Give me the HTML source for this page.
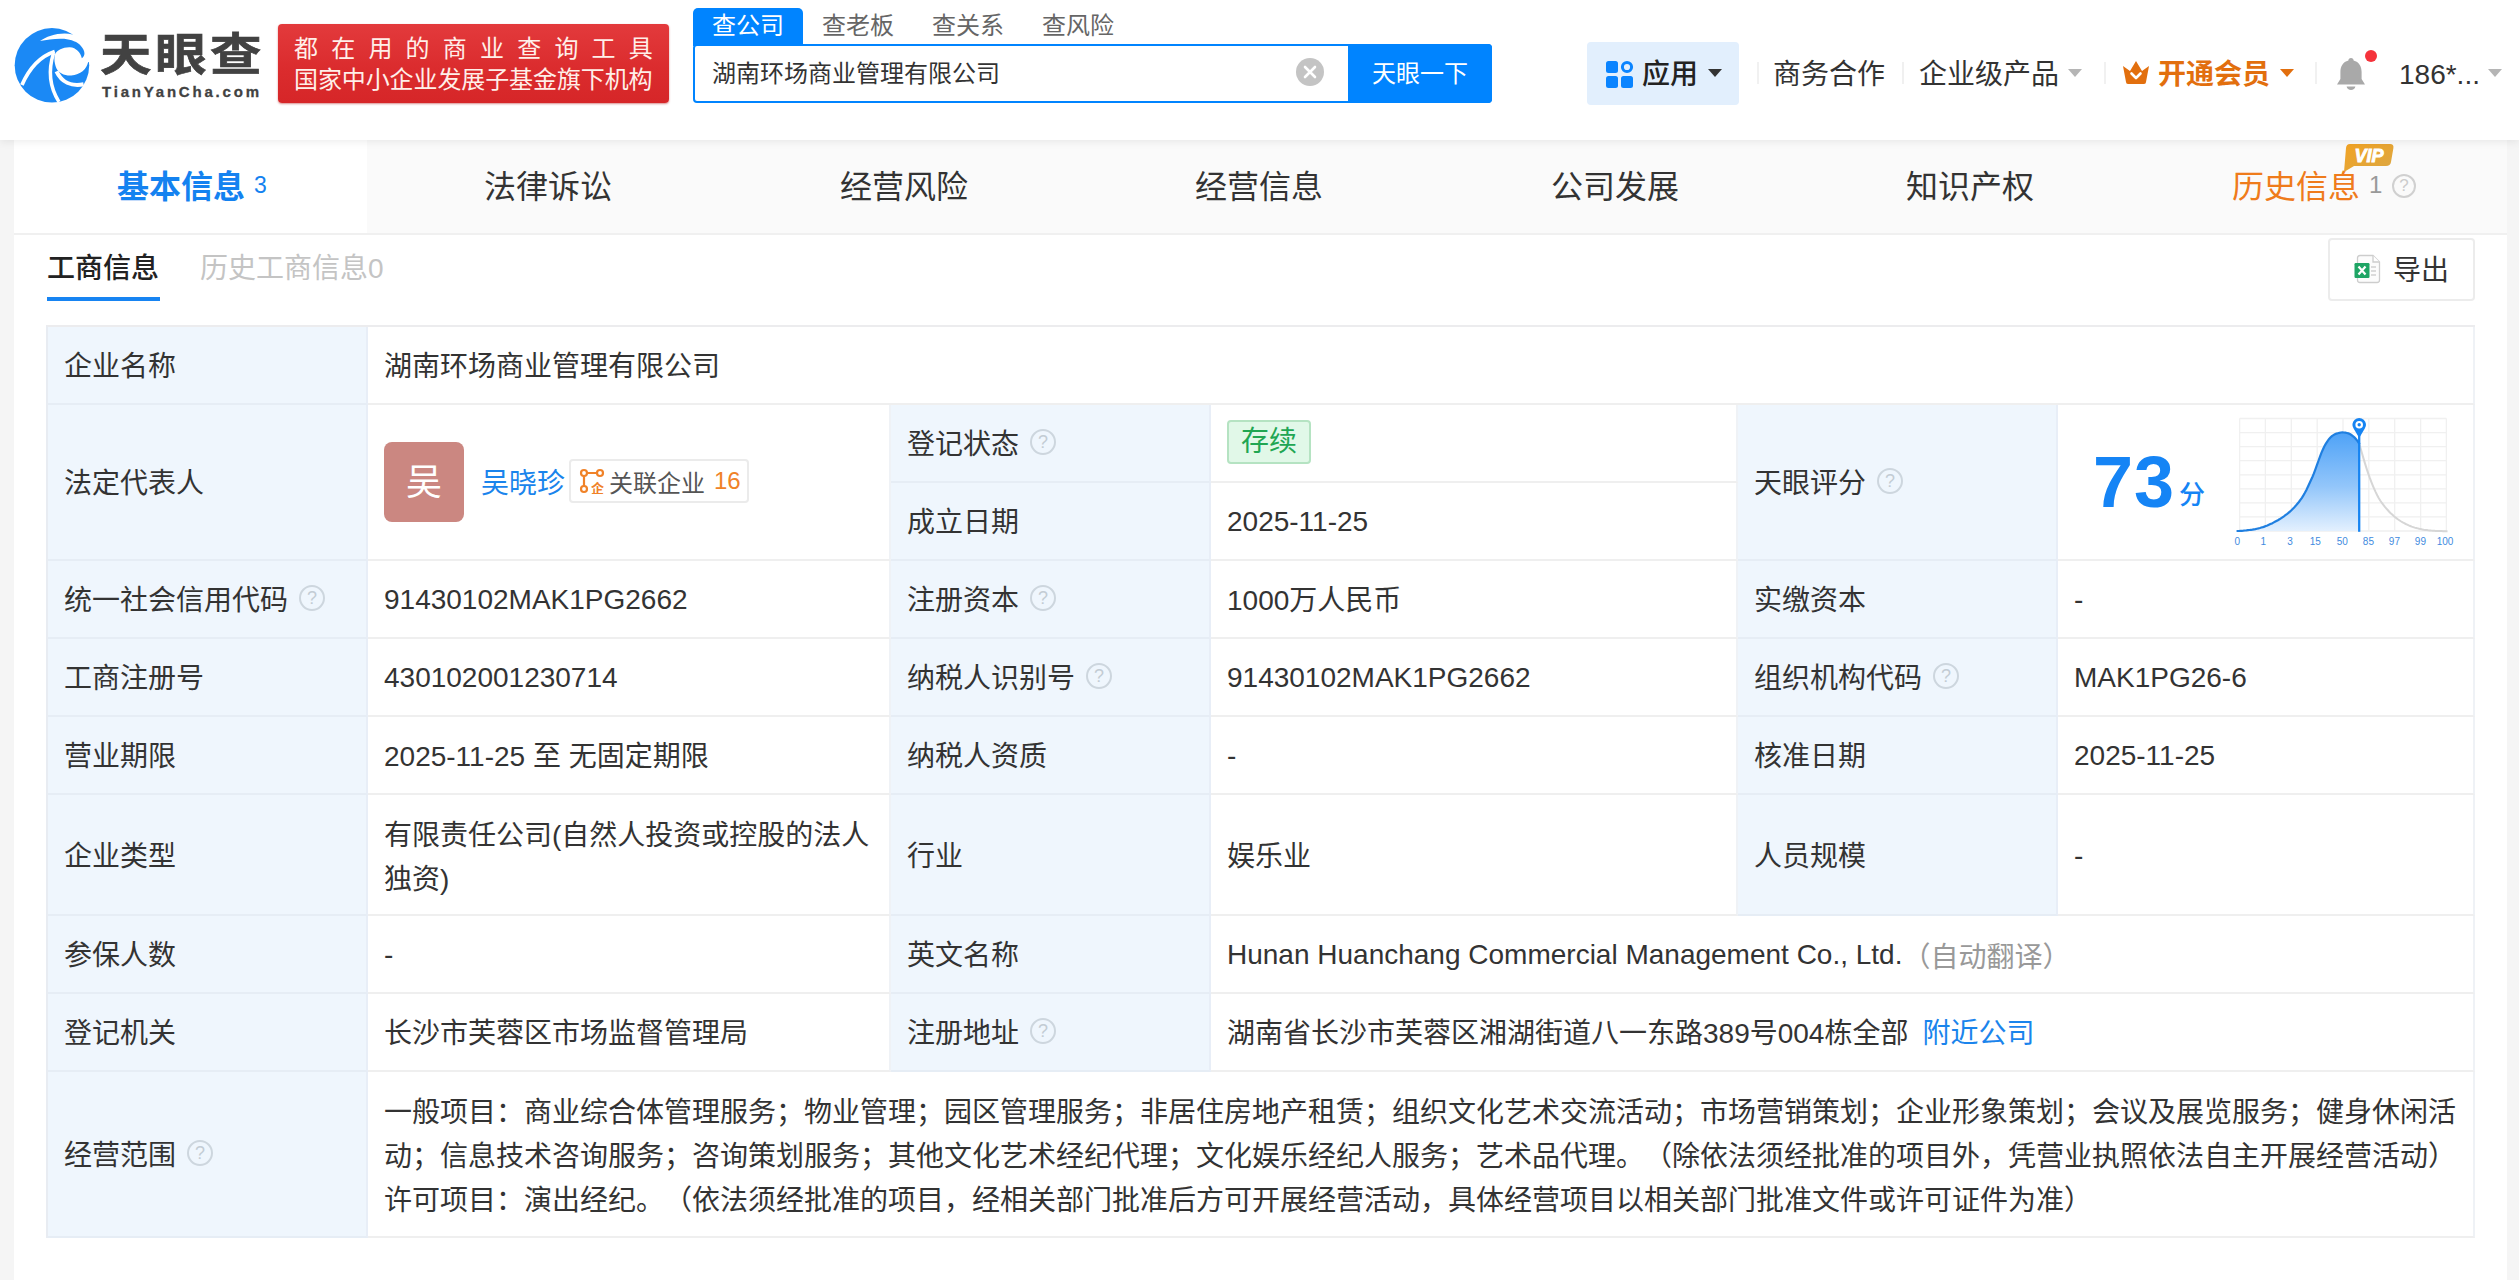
<!DOCTYPE html>
<html lang="zh-CN">
<head>
<meta charset="utf-8">
<title>湖南环场商业管理有限公司 - 天眼查</title>
<style>
*{box-sizing:border-box;margin:0;padding:0}
html,body{width:2519px;height:1280px;overflow:hidden;background:#f5f5f5}
body{position:relative;text-spacing-trim:space-all;font-family:"Liberation Sans","Noto Sans CJK SC",sans-serif;color:#333;font-size:28px}
.abs{position:absolute;white-space:nowrap}
/* header */
#hdr{position:absolute;left:0;top:0;width:2519px;height:140px;background:#fff;box-shadow:0 2px 8px rgba(0,0,0,.075);z-index:5}
#card{position:absolute;left:14px;top:140px;width:2493px;height:1140px;background:#fff}
#nav{position:absolute;left:0;top:0;width:2493px;height:95px;background:#fafafa;border-bottom:2px solid #f0f0f0}
.nt{position:absolute;top:1px;height:94px;line-height:92px;text-align:center;font-size:32px;color:#333;white-space:nowrap}
/* table */
.c{position:absolute;padding-bottom:2px;border-right:2px solid #eff2f6;border-bottom:2px solid #efefef;padding-left:16px;white-space:nowrap;display:flex;align-items:center;font-size:28px;color:#333}
.c.n{padding-bottom:0;padding-top:2px}
.c.m{padding-bottom:0;padding-top:6px}
.l{background:#eff6fd;border-right-color:#e8eef7;border-bottom-color:#e6edf5}
.q{display:inline-block;width:26px;height:26px;border:2px solid #cdd6de;border-radius:50%;margin-left:11px;position:relative;top:0;font-size:18px;line-height:22px;text-align:center;color:#c3ccd4;font-family:"Liberation Sans",sans-serif}
</style>
</head>
<body>
<div id="hdr">
<!-- logo -->
<svg class="abs" style="left:8px;top:20px" width="90" height="90" viewBox="0 0 90 90"><g transform="scale(0.07031)">
<circle cx="625" cy="645" r="530" fill="#1b89f5"/>
<path d="M450 302 C560 220 760 165 920 205 L1100 150 L1300 640 L1140 598 C1120 700 1030 780 900 790 C800 795 720 750 690 690 C660 620 650 540 672 480 C700 430 780 385 880 388 C970 395 1030 460 1050 545 C1110 500 1090 425 1040 372 C990 312 900 280 800 268 C680 260 560 280 455 300Z" fill="#fff"/>
<path d="M198 925 C300 690 450 520 665 448" stroke="#fff" stroke-width="54" fill="none"/>
<path d="M648 470 C575 700 590 950 725 1165" stroke="#fff" stroke-width="50" fill="none"/>
<path d="M690 730 C760 880 900 950 1075 915" stroke="#fff" stroke-width="58" fill="none"/>
</g></svg>
<div class="abs" id="lg1" style="left:100px;top:18px;font-size:45px;font-weight:bold;letter-spacing:3px;color:#424242;line-height:68px;font-family:'Noto Sans CJK SC',sans-serif;transform-origin:0 0;transform:scaleX(1.145);-webkit-text-stroke:0.7px #424242">天眼查</div>
<div class="abs" id="lg2" style="left:102px;top:82px;font-size:15px;font-weight:bold;letter-spacing:2.8px;color:#424242;line-height:20px;-webkit-text-stroke:0.3px #424242">TianYanCha.com</div>
<!-- red banner -->
<div class="abs" style="left:278px;top:24px;width:391px;height:79px;border-radius:4px;background:linear-gradient(180deg,#e33a3c 0%,#db2c2e 55%,#d62628 100%);box-shadow:0 1px 2px rgba(180,30,30,.5)"></div>
<div class="abs" style="left:294px;top:32px;font-size:24px;line-height:34px;color:#ffefe9;letter-spacing:13.2px">都在用的商业查询工具</div>
<div class="abs" style="left:294px;top:63px;font-size:24px;line-height:34px;color:#ffefe9;letter-spacing:-0.1px">国家中小企业发展子基金旗下机构</div>
<!-- search -->
<div class="abs" style="left:693px;top:8px;width:110px;height:38px;background:#0084ff;border-radius:5px 5px 0 0"></div>
<div class="abs" style="left:712px;top:9px;font-size:24px;line-height:34px;color:#fff">查公司</div>
<div class="abs" style="left:822px;top:9px;font-size:24px;line-height:34px;color:#666">查老板</div>
<div class="abs" style="left:932px;top:9px;font-size:24px;line-height:34px;color:#666">查关系</div>
<div class="abs" style="left:1042px;top:9px;font-size:24px;line-height:34px;color:#666">查风险</div>
<div class="abs" style="left:693px;top:44px;width:799px;height:59px;border:2px solid #0084ff;border-radius:4px;background:#fff"></div>
<div class="abs" style="left:1348px;top:44px;width:144px;height:59px;background:#0084ff;border-radius:0 4px 4px 0"></div>
<div class="abs" style="left:712px;top:57px;font-size:24px;line-height:34px;color:#333">湖南环场商业管理有限公司</div>
<div class="abs" style="left:1372px;top:57px;font-size:24px;line-height:34px;color:#fff">天眼一下</div>
<svg class="abs" style="left:1296px;top:58px" width="28" height="28" viewBox="0 0 28 28"><circle cx="14" cy="14" r="14" fill="#c4c4c4"/><path d="M9 9L19 19M19 9L9 19" stroke="#fff" stroke-width="2.6" stroke-linecap="round"/></svg>
<!-- right nav -->
<div class="abs" style="left:1587px;top:42px;width:152px;height:63px;background:#e2effd;border-radius:4px"></div>
<svg class="abs" style="left:1606px;top:60px" width="28" height="28" viewBox="0 0 28 28"><rect x="0" y="1" width="12" height="12" rx="2.5" fill="#0a84ff"/><rect x="0" y="16" width="12" height="12" rx="2.5" fill="#0a84ff"/><rect x="15" y="16" width="12" height="12" rx="2.5" fill="#0a84ff"/><circle cx="21" cy="7" r="4.6" fill="none" stroke="#0a84ff" stroke-width="3"/></svg>
<div class="abs" style="left:1642px;top:55px;font-size:28px;line-height:40px;color:#222;font-weight:500">应用</div>
<div class="abs" style="left:1708px;top:69px;width:0;height:0;border-left:7px solid transparent;border-right:7px solid transparent;border-top:8px solid #333"></div>
<div class="abs" style="left:1757px;top:62px;width:2px;height:22px;background:#f1f1f1"></div>
<div class="abs" style="left:1773px;top:55px;font-size:28px;line-height:40px;color:#333">商务合作</div>
<div class="abs" style="left:1902px;top:62px;width:2px;height:22px;background:#f0f0f0"></div>
<div class="abs" style="left:1919px;top:55px;font-size:28px;line-height:40px;color:#333">企业级产品</div>
<div class="abs" style="left:2068px;top:69px;width:0;height:0;border-left:7px solid transparent;border-right:7px solid transparent;border-top:8px solid #b5b5b5"></div>
<div class="abs" style="left:2104px;top:62px;width:2px;height:22px;background:#f1f1f1"></div>
<svg class="abs" style="left:2121px;top:58px" width="30" height="28" viewBox="0 0 30 28"><path d="M2 8 L9 13 L15 3 L21 13 L28 8 L25 24 Q25 26 23 26 L7 26 Q5 26 5 24 Z" fill="#e26f0e"/><path d="M10.5 15.5 L15 20 L19.5 15.5" fill="none" stroke="#fff" stroke-width="2.6" stroke-linecap="round" stroke-linejoin="round"/></svg>
<div class="abs" style="left:2158px;top:55px;font-size:28px;line-height:40px;color:#e26f0e;font-weight:bold">开通会员</div>
<div class="abs" style="left:2280px;top:69px;width:0;height:0;border-left:7px solid transparent;border-right:7px solid transparent;border-top:8px solid #e26f0e"></div>
<div class="abs" style="left:2315px;top:62px;width:2px;height:22px;background:#f1f1f1"></div>
<svg class="abs" style="left:2334px;top:56px" width="34" height="36" viewBox="0 0 34 36"><path d="M17 2 C18.6 2 19.6 3 19.6 4.6 C25 6 27.6 10.6 27.6 16 L27.6 23 L31 28.4 L3 28.4 L6.4 23 L6.4 16 C6.4 10.6 9 6 14.4 4.6 C14.4 3 15.4 2 17 2 Z" fill="#a9a9a9"/><path d="M12.6 30.6 L21.4 30.6 C21 33 19.2 34 17 34 C14.8 34 13 33 12.6 30.6Z" fill="#a9a9a9"/></svg>
<div class="abs" style="left:2365px;top:50px;width:12px;height:12px;border-radius:50%;background:#f5333b"></div>
<div class="abs" style="left:2399px;top:55px;font-size:28px;line-height:40px;color:#333">186*...</div>
<div class="abs" style="left:2488px;top:69px;width:0;height:0;border-left:7px solid transparent;border-right:7px solid transparent;border-top:8px solid #b5b5b5"></div>
</div>
<div id="card">
<div id="nav">
<div class="abs" style="left:0;top:0;width:353px;height:93px;background:#fff"></div>
<div class="nt" style="left:103px;color:#1482f0;font-weight:bold">基本信息</div>
<div class="abs" style="left:240px;top:31px;font-size:23px;line-height:28px;color:#1482f0">3</div>
<div class="nt" style="left:470px">法律诉讼</div>
<div class="nt" style="left:826px">经营风险</div>
<div class="nt" style="left:1181px">经营信息</div>
<div class="nt" style="left:1537px">公司发展</div>
<div class="nt" style="left:1892px">知识产权</div>
<div class="nt" style="left:2218px;color:#ef7b1b">历史信息</div>
<div class="abs" style="left:2355px;top:31px;font-size:24px;line-height:28px;color:#999">1</div>
<div class="abs" style="left:2378px;top:34px;width:24px;height:24px;border:2px solid #d0d0d0;border-radius:50%;font-size:17px;line-height:20px;text-align:center;color:#ccc">?</div>
<svg class="abs" style="left:2328px;top:3px" width="54" height="30" viewBox="0 0 54 30"><defs><linearGradient id="vg" x1="0" y1="0" x2="1" y2="1"><stop offset="0" stop-color="#f2a324"/><stop offset="1" stop-color="#dba743"/></linearGradient></defs><path d="M8 1 L48 1 Q52 1 51.4 5 L49 19 Q48.4 23 44 23 L12 23 L2 29 L4 5 Q4.4 1 8 1Z" fill="url(#vg)"/><text x="27" y="19" font-family="Liberation Sans, sans-serif" font-size="18" font-weight="bold" font-style="italic" fill="#fff" stroke="#fff" stroke-width="0.9" text-anchor="middle">VIP</text></svg>
</div>
<div class="abs" style="left:33px;top:109px;font-size:28px;line-height:40px;color:#222;font-weight:500">工商信息</div>
<div class="abs" style="left:33px;top:157px;width:113px;height:4px;background:#1784f2"></div>
<div class="abs" style="left:186px;top:109px;font-size:28px;line-height:40px;color:#c4c4c4">历史工商信息0</div>
<div class="abs" style="left:2314px;top:98px;width:147px;height:63px;border:2px solid #ececec;border-radius:4px;background:#fff"></div>
<svg class="abs" style="left:2339px;top:114px" width="28" height="30" viewBox="0 0 28 30"><path d="M7 1.5 H20 L26.5 8 V26 Q26.5 28.5 24 28.5 H7 Q4.5 28.5 4.5 26 V4 Q4.5 1.5 7 1.5Z" fill="#fcfcfc" stroke="#cdcdcd" stroke-width="1.3"/><path d="M20 1.5 V8 H26.5" fill="#fff" stroke="#cdcdcd" stroke-width="1.3"/><path d="M18 13h5M18 17h5M18 21h5" stroke="#d0d0d0" stroke-width="1.4"/><rect x="1.5" y="9" width="15" height="15" rx="1.2" fill="#1fa565"/><path d="M5.5 12.5 L12.5 20.5 M12.5 12.5 L5.5 20.5" stroke="#fff" stroke-width="2.2"/></svg>
<div class="abs" style="left:2379px;top:111px;font-size:28px;line-height:40px;color:#333">导出</div>
<div id="tbl" style="position:absolute;left:32px;top:185px;width:2429px;height:913px;border-top:2px solid #ececee;border-left:2px solid #e8ecf2">
<div class="c l" style="left:0px;top:0px;width:320px;height:78px;">企业名称</div>
<div class="c" style="left:320px;top:0px;width:2107px;height:78px;">湖南环场商业管理有限公司</div>
<div class="c l" style="left:0px;top:78px;width:320px;height:156px;">法定代表人</div>
<div class="c" style="left:320px;top:78px;width:523px;height:156px;"><span style="display:inline-block;width:80px;height:80px;border-radius:8px;background:#cb8781;color:#fff;font-size:36px;line-height:82px;text-align:center;position:relative;top:1px">吴</span><span style="color:#1a84ec;margin-left:17px">吴晓珍</span><span style="display:inline-flex;align-items:center;height:44px;border:2px solid #ebebeb;border-radius:4px;margin-left:4px;padding:0 6px 0 8px;font-size:24px;color:#555;background:#fff"><svg width="26" height="26" viewBox="0 0 26 26" style="margin-right:4px"><g fill="none" stroke="#f08228" stroke-width="2.2"><circle cx="5" cy="5" r="3"/><circle cx="21" cy="5" r="3"/><circle cx="5" cy="21" r="3"/><path d="M8 5H18M5 8V18"/></g><text x="12" y="25" font-size="13" fill="#f08228" font-family="Noto Sans CJK SC, sans-serif" font-weight="bold">企</text></svg>关联企业<span style="color:#f08228;margin-left:9px">16</span></span></div>
<div class="c l" style="left:843px;top:78px;width:320px;height:78px;">登记状态<span class="q">?</span></div>
<div class="c" style="left:1163px;top:78px;width:527px;height:78px;"><span style="display:inline-block;height:44px;line-height:40px;padding:0 12px;border:2px solid #b5e3c2;border-radius:4px;background:#e1f8e8;color:#21a652;font-size:28px">存续</span></div>
<div class="c l" style="left:843px;top:156px;width:320px;height:78px;">成立日期</div>
<div class="c n" style="left:1163px;top:156px;width:527px;height:78px;">2025-11-25</div>
<div class="c l" style="left:1690px;top:78px;width:320px;height:156px;">天眼评分<span class="q">?</span></div>
<div class="c" style="left:2010px;top:78px;width:417px;height:156px;"><svg class="abs" style="left:-1px;top:-1px" width="417" height="154" viewBox="0 0 417 154"><defs><linearGradient id="sg" x1="0" y1="0" x2="0" y2="1"><stop offset="0" stop-color="#4ea2f7"/><stop offset="0.55" stop-color="#93c6fa"/><stop offset="1" stop-color="#e3f0fe"/></linearGradient></defs>
<path d="M182.6 14.5V127.0M208.4 14.5V127.0M234.3 14.5V127.0M260.2 14.5V127.0M286.0 14.5V127.0M311.8 14.5V127.0M337.7 14.5V127.0M363.6 14.5V127.0M389.4 14.5V127.0M182.6 14.5H389.4M182.6 28.6H389.4M182.6 42.6H389.4M182.6 56.7H389.4M182.6 70.8H389.4M182.6 84.8H389.4M182.6 98.9H389.4M182.6 112.9H389.4M182.6 127.0H389.4" stroke="#f0f0f0" stroke-width="1.3" fill="none"/>
<path d="M180.4,127.0 L181.9,127.0 L183.4,126.9 L184.9,126.8 L186.4,126.7 L187.9,126.5 L189.4,126.4 L190.9,126.2 L192.4,126.0 L193.9,125.8 L195.4,125.6 L196.9,125.3 L198.4,125.1 L199.9,124.7 L201.4,124.4 L202.9,124.0 L204.4,123.5 L205.9,123.1 L207.4,122.6 L208.9,122.0 L210.4,121.5 L211.9,120.8 L213.4,120.1 L214.9,119.4 L216.4,118.6 L217.9,117.8 L219.4,117.0 L220.9,116.2 L222.4,115.3 L223.9,114.3 L225.4,113.3 L226.9,112.3 L228.4,111.2 L229.9,110.1 L231.4,108.9 L232.9,107.6 L234.4,106.2 L235.9,104.7 L237.4,103.2 L238.9,101.6 L240.4,99.8 L241.9,98.0 L243.4,95.9 L244.9,93.8 L246.4,91.4 L247.9,88.8 L249.4,85.9 L250.9,82.7 L252.4,79.5 L253.9,76.3 L255.4,73.0 L256.9,69.4 L258.4,65.4 L259.9,61.2 L261.4,57.0 L262.9,52.9 L264.4,48.9 L265.9,45.5 L267.4,42.3 L268.9,39.6 L270.4,37.3 L271.9,35.2 L273.4,33.5 L274.9,32.1 L276.4,31.1 L277.9,30.3 L279.4,29.6 L280.9,29.2 L282.4,28.8 L283.9,28.5 L285.4,28.4 L286.9,28.5 L288.4,28.7 L289.9,29.0 L291.4,29.4 L292.9,30.0 L294.4,31.0 L295.9,32.1 L297.4,33.4 L298.9,35.0 L300.4,36.9 L301.9,39.0 L302.2,39.4 L302.2,127.0 L180.4,127.0Z" fill="url(#sg)"/>
<path d="M302.2,39.4 L303.7,44.7 L305.2,50.0 L306.7,55.1 L308.2,60.1 L309.7,64.9 L311.2,69.4 L312.7,73.7 L314.2,77.6 L315.7,81.3 L317.2,84.8 L318.7,88.1 L320.2,91.2 L321.7,94.0 L323.2,96.5 L324.7,98.7 L326.2,100.7 L327.7,102.6 L329.2,104.4 L330.7,106.0 L332.2,107.7 L333.7,109.2 L335.2,110.6 L336.7,112.0 L338.2,113.2 L339.7,114.4 L341.2,115.5 L342.7,116.5 L344.2,117.5 L345.7,118.4 L347.2,119.2 L348.7,120.0 L350.2,120.7 L351.7,121.4 L353.2,122.0 L354.7,122.6 L356.2,123.1 L357.7,123.6 L359.2,124.0 L360.7,124.4 L362.2,124.8 L363.7,125.1 L365.2,125.4 L366.7,125.7 L368.2,125.9 L369.7,126.1 L371.2,126.3 L372.7,126.4 L374.2,126.6 L375.7,126.7 L377.2,126.8 L378.7,126.9 L380.2,127.0 L381.7,127.1 L383.2,127.1 L384.7,127.1 L386.2,127.2 L387.7,127.2 L389.2,127.2 L390.5,127.2" stroke="#d6d6d6" stroke-width="2" fill="none"/>
<path d="M180.4,127.0 L181.9,127.0 L183.4,126.9 L184.9,126.8 L186.4,126.7 L187.9,126.5 L189.4,126.4 L190.9,126.2 L192.4,126.0 L193.9,125.8 L195.4,125.6 L196.9,125.3 L198.4,125.1 L199.9,124.7 L201.4,124.4 L202.9,124.0 L204.4,123.5 L205.9,123.1 L207.4,122.6 L208.9,122.0 L210.4,121.5 L211.9,120.8 L213.4,120.1 L214.9,119.4 L216.4,118.6 L217.9,117.8 L219.4,117.0 L220.9,116.2 L222.4,115.3 L223.9,114.3 L225.4,113.3 L226.9,112.3 L228.4,111.2 L229.9,110.1 L231.4,108.9 L232.9,107.6 L234.4,106.2 L235.9,104.7 L237.4,103.2 L238.9,101.6 L240.4,99.8 L241.9,98.0 L243.4,95.9 L244.9,93.8 L246.4,91.4 L247.9,88.8 L249.4,85.9 L250.9,82.7 L252.4,79.5 L253.9,76.3 L255.4,73.0 L256.9,69.4 L258.4,65.4 L259.9,61.2 L261.4,57.0 L262.9,52.9 L264.4,48.9 L265.9,45.5 L267.4,42.3 L268.9,39.6 L270.4,37.3 L271.9,35.2 L273.4,33.5 L274.9,32.1 L276.4,31.1 L277.9,30.3 L279.4,29.6 L280.9,29.2 L282.4,28.8 L283.9,28.5 L285.4,28.4 L286.9,28.5 L288.4,28.7 L289.9,29.0 L291.4,29.4 L292.9,30.0 L294.4,31.0 L295.9,32.1 L297.4,33.4 L298.9,35.0 L300.4,36.9 L301.9,39.0 L302.2,39.4" stroke="#1f7fe0" stroke-width="2.2" fill="none" stroke-linecap="round"/>
<path d="M302.2 127.8V29.0" stroke="#1684f2" stroke-width="2.3"/>
<path d="M302.2 34.0 L296.6 24.6 A6.8 6.8 0 1 1 307.8 24.6Z" fill="#1684f2"/>
<circle cx="302.2" cy="20.7" r="3.8" fill="#fff"/><circle cx="302.2" cy="20.7" r="1.7" fill="#1684f2"/>
<g font-family="Liberation Sans, sans-serif" font-size="10" fill="#3f8be0"><text x="180.4" y="141.4" text-anchor="middle">0</text><text x="206.4" y="141.4" text-anchor="middle">1</text><text x="233.0" y="141.4" text-anchor="middle">3</text><text x="258.2" y="141.4" text-anchor="middle">15</text><text x="285.2" y="141.4" text-anchor="middle">50</text><text x="311.4" y="141.4" text-anchor="middle">85</text><text x="337.4" y="141.4" text-anchor="middle">97</text><text x="363.4" y="141.4" text-anchor="middle">99</text><text x="388.0" y="141.4" text-anchor="middle">100</text></g>
</svg>
<div class="abs" style="left:35px;top:35px;font-size:72px;line-height:84px;font-weight:bold;color:#1584f5;letter-spacing:1px">73</div>
<div class="abs" style="left:121px;top:72px;font-size:26px;line-height:36px;color:#1584f5;font-weight:500">分</div></div>
<div class="c l" style="left:0px;top:234px;width:320px;height:78px;">统一社会信用代码<span class="q">?</span></div>
<div class="c n" style="left:320px;top:234px;width:523px;height:78px;">91430102MAK1PG2662</div>
<div class="c l" style="left:843px;top:234px;width:320px;height:78px;">注册资本<span class="q">?</span></div>
<div class="c" style="left:1163px;top:234px;width:527px;height:78px;">1000万人民币</div>
<div class="c l" style="left:1690px;top:234px;width:320px;height:78px;">实缴资本</div>
<div class="c n" style="left:2010px;top:234px;width:417px;height:78px;">-</div>
<div class="c l" style="left:0px;top:312px;width:320px;height:78px;">工商注册号</div>
<div class="c n" style="left:320px;top:312px;width:523px;height:78px;">430102001230714</div>
<div class="c l" style="left:843px;top:312px;width:320px;height:78px;">纳税人识别号<span class="q">?</span></div>
<div class="c n" style="left:1163px;top:312px;width:527px;height:78px;">91430102MAK1PG2662</div>
<div class="c l" style="left:1690px;top:312px;width:320px;height:78px;">组织机构代码<span class="q">?</span></div>
<div class="c n" style="left:2010px;top:312px;width:417px;height:78px;">MAK1PG26-6</div>
<div class="c l" style="left:0px;top:390px;width:320px;height:78px;">营业期限</div>
<div class="c" style="left:320px;top:390px;width:523px;height:78px;">2025-11-25 至 无固定期限</div>
<div class="c l" style="left:843px;top:390px;width:320px;height:78px;">纳税人资质</div>
<div class="c n" style="left:1163px;top:390px;width:527px;height:78px;">-</div>
<div class="c l" style="left:1690px;top:390px;width:320px;height:78px;">核准日期</div>
<div class="c n" style="left:2010px;top:390px;width:417px;height:78px;">2025-11-25</div>
<div class="c l" style="left:0px;top:468px;width:320px;height:121px;">企业类型</div>
<div class="c m" style="left:320px;top:468px;width:523px;height:121px;"><span style="white-space:normal;line-height:44px;display:block;width:490px">有限责任公司(自然人投资或控股的法人独资)</span></div>
<div class="c l" style="left:843px;top:468px;width:320px;height:121px;">行业</div>
<div class="c" style="left:1163px;top:468px;width:527px;height:121px;">娱乐业</div>
<div class="c l" style="left:1690px;top:468px;width:320px;height:121px;">人员规模</div>
<div class="c n" style="left:2010px;top:468px;width:417px;height:121px;">-</div>
<div class="c l" style="left:0px;top:589px;width:320px;height:78px;">参保人数</div>
<div class="c n" style="left:320px;top:589px;width:523px;height:78px;">-</div>
<div class="c l" style="left:843px;top:589px;width:320px;height:78px;">英文名称</div>
<div class="c n" style="left:1163px;top:589px;width:1264px;height:78px;">Hunan Huanchang Commercial Management Co., Ltd.<span style="color:#999">（自动翻译）</span></div>
<div class="c l" style="left:0px;top:667px;width:320px;height:78px;">登记机关</div>
<div class="c" style="left:320px;top:667px;width:523px;height:78px;">长沙市芙蓉区市场监督管理局</div>
<div class="c l" style="left:843px;top:667px;width:320px;height:78px;">注册地址<span class="q">?</span></div>
<div class="c" style="left:1163px;top:667px;width:1264px;height:78px;">湖南省长沙市芙蓉区湘湖街道八一东路389号004栋全部<span style="color:#1a84ec;margin-left:14px">附近公司</span></div>
<div class="c l" style="left:0px;top:745px;width:320px;height:166px;">经营范围<span class="q">?</span></div>
<div class="c m" style="left:320px;top:745px;width:2107px;height:166px;"><span style="white-space:normal;line-height:44px;display:block;width:2076px">一般项目：商业综合体管理服务；物业管理；园区管理服务；非居住房地产租赁；组织文化艺术交流活动；市场营销策划；企业形象策划；会议及展览服务；健身休闲活动；信息技术咨询服务；咨询策划服务；其他文化艺术经纪代理；文化娱乐经纪人服务；艺术品代理。（除依法须经批准的项目外，凭营业执照依法自主开展经营活动）<br>许可项目：演出经纪。（依法须经批准的项目，经相关部门批准后方可开展经营活动，具体经营项目以相关部门批准文件或许可证件为准）</span></div>
</div>

</div>
</body>
</html>
